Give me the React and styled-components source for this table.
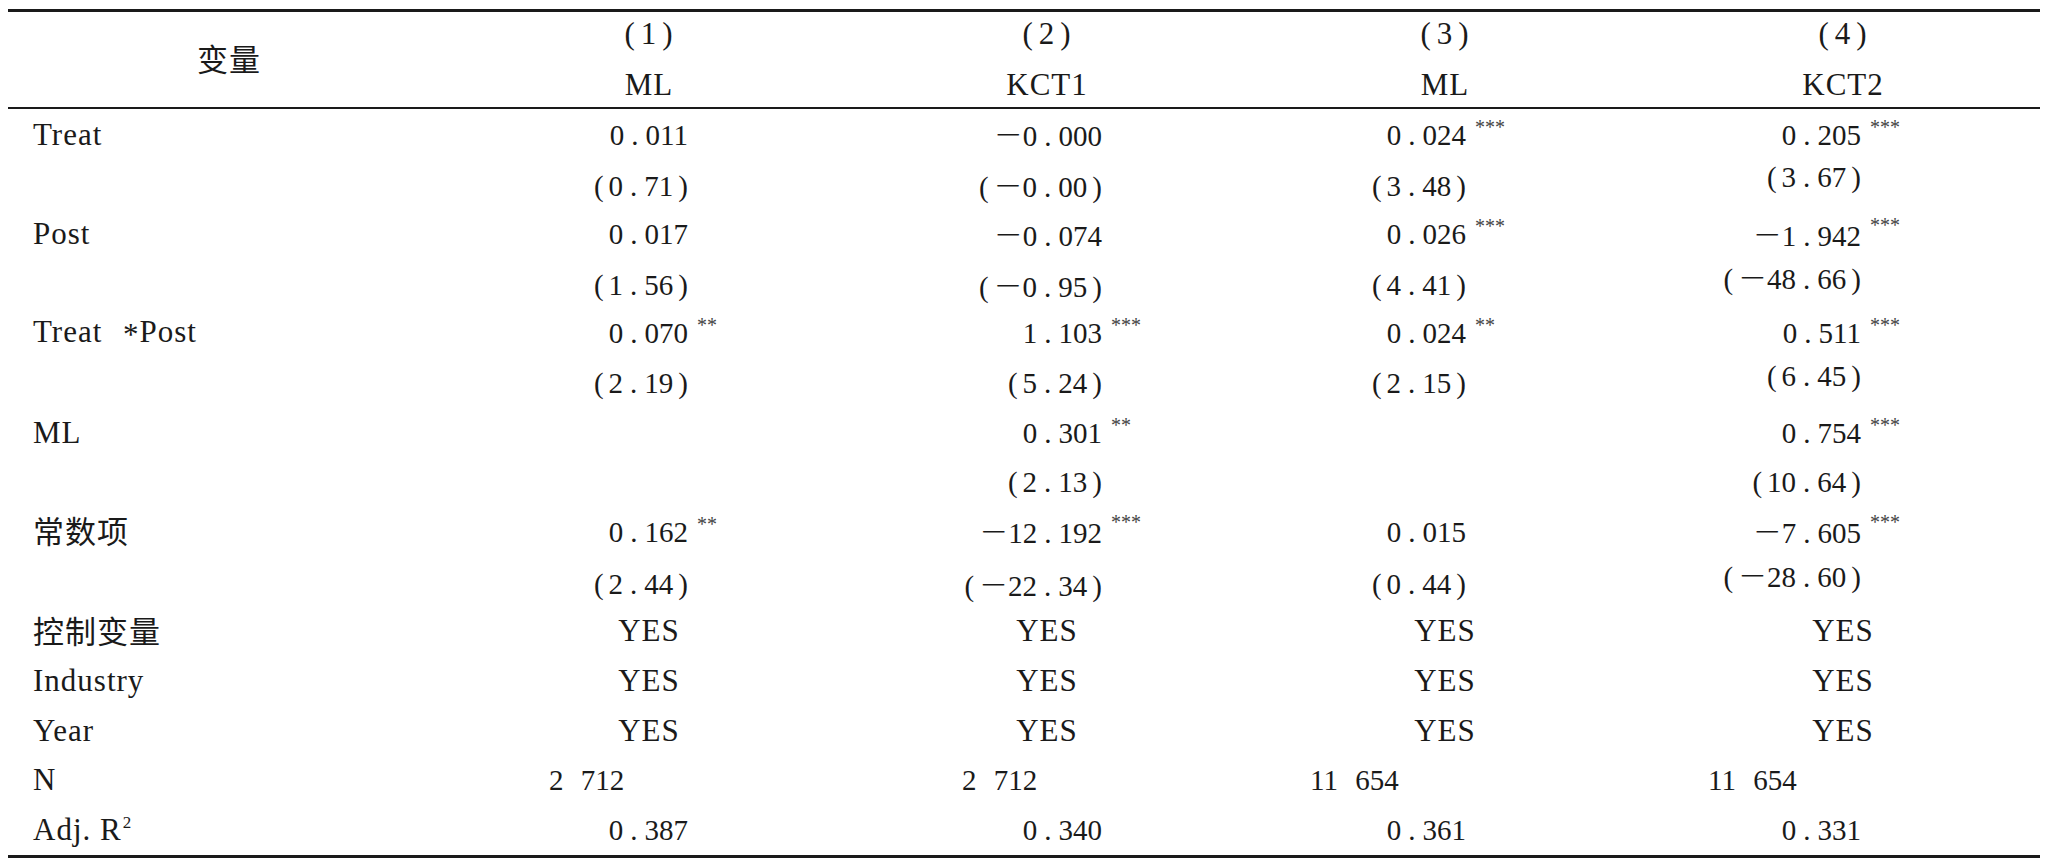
import React from "react";
import styled, { createGlobalStyle } from "styled-components";

const GlobalStyle = createGlobalStyle`
  body {
    margin: 8px;
    background: #ffffff;
    font-family: "Liberation Serif", "Times New Roman", serif;
  }
`;

// label column + four model columns
const COLS = "442px repeat(4, 398px)";

// where the numbers sit inside each model column (scanned table, not quite regular)
const colSpec = [
  { pad: 160, nLeft: 99 },
  { pad: 144, nLeft: 114 },
  { pad: 178, nLeft: 64 },
  { pad: 181, nLeft: 64 },
];

const Table = styled.div`
  width: 2034px;
  margin-top: 1px;
  border-top: 3px solid #1a1a1a;
  border-bottom: 3px solid #1a1a1a;
  font-family: "Liberation Serif", "Times New Roman", serif;
  color: #1a1a1a;
`;

const Cjk = styled.span`
  font-family: "Noto Sans CJK SC", sans-serif;
`;

const Head = styled.div`
  display: grid;
  grid-template-columns: ${COLS};
  height: 95px;
  border-bottom: 2px solid #1a1a1a;
`;

const HeadLabel = styled.div`
  display: flex;
  align-items: center;
  justify-content: center;
  padding-bottom: 4px;
  font-size: 31px;
  letter-spacing: 1px;
`;

const HeadCell = styled.div`
  display: grid;
  grid-template-rows: 44px 1fr;
  justify-items: center;
  align-items: center;
  font-size: 31px;
  letter-spacing: 1px;
  line-height: 34px;
`;

const HeadName = styled.div`
  align-self: start;
  padding-top: 12px;
`;

const Body = styled.div`
  padding-top: 1px;
`;

const Row = styled.div`
  display: grid;
  grid-template-columns: ${COLS};
  height: 49.65px;
  align-items: center;
`;

const Label = styled.div`
  padding-left: 25px;
  font-size: 31px;
  letter-spacing: 1px;
  line-height: 34px;
  white-space: nowrap;
`;

const Times = styled.span`
  margin-left: 12px;
  vertical-align: -3px;
`;

const Sup = styled.sup`
  font-size: 17px;
  vertical-align: 12px;
  line-height: 0;
  margin-left: 1px;
`;

const NumCell = styled.div`
  display: grid;
  grid-template-columns: 1fr ${(p) => p.$pad}px;
  font-size: 29px;
  line-height: 34px;
  white-space: nowrap;
  margin-bottom: ${(p) => (p.$lift || 0) * 2}px;
`;

const Num = styled.span`
  justify-self: end;
`;

const Minus = styled.span`
  font-family: "Noto Sans CJK SC", sans-serif;
  font-weight: 300;
`;

const Stars = styled.span`
  align-self: start;
  margin-top: -1px;
  padding-left: 9px;
  font-size: 20px;
  line-height: 20px;
  color: #444444;
`;

const YesCell = styled.div`
  text-align: center;
  font-size: 31px;
  letter-spacing: 1px;
  line-height: 34px;
`;

const CountCell = styled.div`
  padding-left: ${(p) => p.$left}px;
  font-size: 29px;
  line-height: 34px;
  word-spacing: 10px;
  white-space: nowrap;
`;

const Dot = styled.span`
  margin: 0 7px;
`;

const Paren = styled.span`
  margin: ${(p) => (p.$open ? "0 5px 0 0" : "0 0 0 5px")};
`;

const fmt = (s) =>
  [...s].map((ch, i) => {
    if (ch === ".") return <Dot key={i}>.</Dot>;
    if (ch === "(") return <Paren key={i} $open>(</Paren>;
    if (ch === ")") return <Paren key={i}>)</Paren>;
    if (ch === "－") return <Minus key={i}>－</Minus>;
    return <React.Fragment key={i}>{ch}</React.Fragment>;
  });

const headers = [
  ["(1)", "ML"],
  ["(2)", "KCT1"],
  ["(3)", "ML"],
  ["(4)", "KCT2"],
];

const rows = [
  { label: "Treat", kind: "num", cells: ["0.011", "－0.000", "0.024***", "0.205***"] },
  { label: "", kind: "num", cells: ["(0.71)", "(－0.00)", "(3.48)", "(3.67)"], lift: [0, 0, 0, 9] },
  { label: "Post", kind: "num", cells: ["0.017", "－0.074", "0.026***", "－1.942***"] },
  { label: "", kind: "num", cells: ["(1.56)", "(－0.95)", "(4.41)", "(－48.66)"], lift: [0, 0, 0, 8] },
  { label: "Treat *Post", kind: "num", cells: ["0.070**", "1.103***", "0.024**", "0.511***"] },
  { label: "", kind: "num", cells: ["(2.19)", "(5.24)", "(2.15)", "(6.45)"], lift: [0, 0, 0, 7] },
  { label: "ML", kind: "num", cells: ["", "0.301**", "", "0.754***"] },
  { label: "", kind: "num", cells: ["", "(2.13)", "", "(10.64)"] },
  { label: "常数项", cjk: true, kind: "num", cells: ["0.162**", "－12.192***", "0.015", "－7.605***"] },
  { label: "", kind: "num", cells: ["(2.44)", "(－22.34)", "(0.44)", "(－28.60)"], lift: [0, 0, 0, 9] },
  { label: "控制变量", cjk: true, kind: "yes", cells: ["YES", "YES", "YES", "YES"] },
  { label: "Industry", kind: "yes", cells: ["YES", "YES", "YES", "YES"] },
  { label: "Year", kind: "yes", cells: ["YES", "YES", "YES", "YES"] },
  { label: "N", kind: "count", cells: ["2 712", "2 712", "11 654", "11 654"] },
  { label: "Adj. R", sup: "2", kind: "num", cells: ["0.387", "0.340", "0.361", "0.331"] },
];

const renderLabel = (row) => {
  if (row.cjk) return <Cjk>{row.label}</Cjk>;
  if (row.label.includes("*")) {
    const [a, b] = row.label.split("*");
    return (
      <>
        {a}
        <Times>*</Times>
        {b}
      </>
    );
  }
  return row.label;
};

const renderCell = (row, value, i) => {
  const spec = colSpec[i];
  if (row.kind === "yes") return <YesCell key={i}>{value}</YesCell>;
  if (row.kind === "count")
    return (
      <CountCell key={i} $left={spec.nLeft}>
        {value}
      </CountCell>
    );
  const [, num, stars] = value.match(/^([^*]*)(\**)$/);
  return (
    <NumCell key={i} $pad={spec.pad} $lift={row.lift ? row.lift[i] : 0}>
      <Num>{fmt(num)}</Num>
      {stars && <Stars>{stars}</Stars>}
    </NumCell>
  );
};

export default function App() {
  return (
    <>
      <GlobalStyle />
      <Table>
        <Head>
          <HeadLabel>
            <Cjk>变量</Cjk>
          </HeadLabel>
          {headers.map(([no, name]) => (
            <HeadCell key={no}>
              <div>{fmt(no)}</div>
              <HeadName>{name}</HeadName>
            </HeadCell>
          ))}
        </Head>
        <Body>
          {rows.map((row, r) => (
            <Row key={r}>
              <Label>
                {renderLabel(row)}
                {row.sup && <Sup>{row.sup}</Sup>}
              </Label>
              {row.cells.map((v, i) => renderCell(row, v, i))}
            </Row>
          ))}
        </Body>
      </Table>
    </>
  );
}
